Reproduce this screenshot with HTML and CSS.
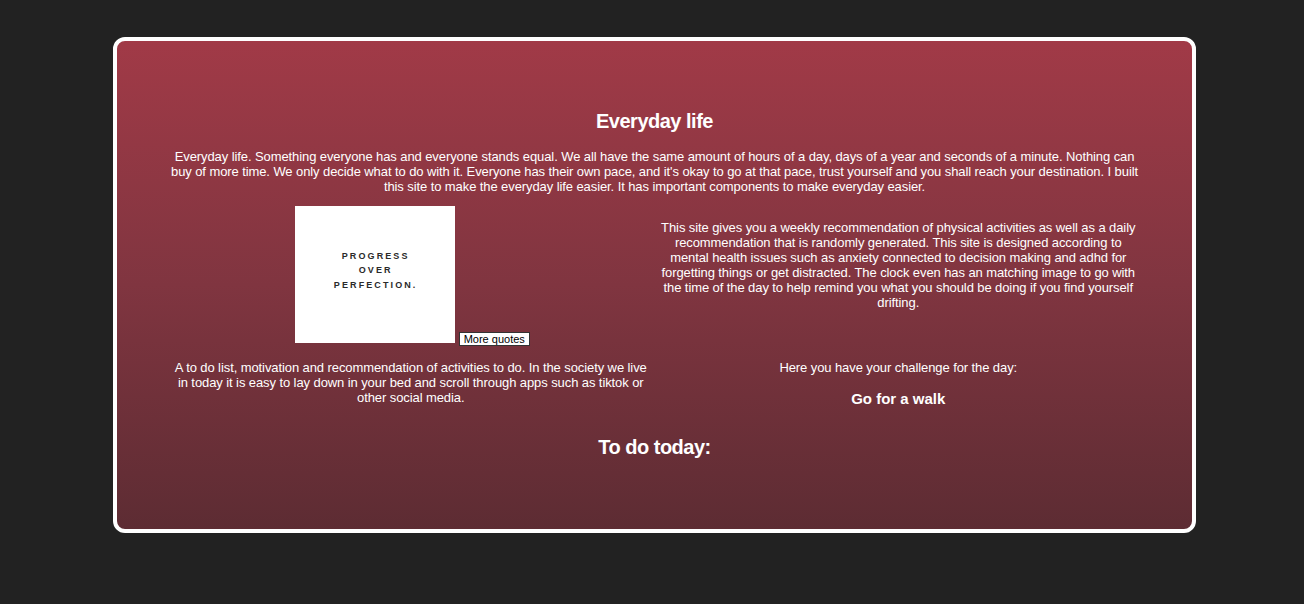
FILE: index.html
```html
<!DOCTYPE html>
<html lang="en">
<head>
<meta charset="utf-8">
<title>Everyday life</title>
<link rel="stylesheet" href="styles.css">
</head>
<body>
<main class="card">
  <h2 class="title">Everyday life</h2>
  <p class="intro">Everyday life. Something everyone has and everyone stands equal. We all have the same amount of hours of a day, days of a year and seconds of a minute. Nothing can buy of more time. We only decide what to do with it. Everyone has their own pace, and it's okay to go at that pace, trust yourself and you shall reach your destination. I built this site to make the everyday life easier. It has important components to make everyday easier.</p>
  <section class="grid">
    <div class="cell quote-cell">
      <div class="quote-img">
        <span>PROGRESS</span>
        <span>OVER</span>
        <span>PERFECTION.</span>
      </div>
      <button class="more-btn">More quotes</button>
    </div>
    <div class="cell text-cell">
      <p class="col-text">This site gives you a weekly recommendation of physical activities as well as a daily recommendation that is randomly generated. This site is designed according to mental health issues such as anxiety connected to decision making and adhd for forgetting things or get distracted. The clock even has an matching image to go with the time of the day to help remind you what you should be doing if you find yourself drifting.</p>
    </div>
    <div class="cell row2">
      <p class="col-text">A to do list, motivation and recommendation of activities to do. In the society we live in today it is easy to lay down in your bed and scroll through apps such as tiktok or other social media.</p>
    </div>
    <div class="cell row2">
      <p class="col-text">Here you have your challenge for the day:</p>
      <h3 class="challenge">Go for a walk</h3>
    </div>
  </section>
  <h2 class="todo">To do today:</h2>
</main>
</body>
</html>
```
FILE: styles.css
```css
html, body {
  margin: 0;
  padding: 0;
}
body {
  background: #222222;
  font-family: "Liberation Sans", Arial, sans-serif;
  color: #ffffff;
  padding: 37px 108px 0 113px;
  height: 604px;
  box-sizing: border-box;
}
.card {
  box-sizing: border-box;
  width: 1083px;
  height: 496px;
  border: 4px solid #ffffff;
  border-radius: 12px;
  background: linear-gradient(180deg, #a13a47 0%, #803540 50%, #5d2c33 100%);
  padding: 69px 50px 0 50px;
  text-align: center;
}
.title {
  font-size: 20px;
  line-height: 23px;
  letter-spacing: -0.5px;
  margin: 0;
  font-weight: bold;
}
.intro {
  font-size: 13px;
  line-height: 15px;
  letter-spacing: -0.09px;
  margin: 16px 0 0 0;
}
.grid {
  display: grid;
  grid-template-columns: 1fr 1fr;
  margin-top: 12px;
}
.cell {
  display: flex;
  flex-direction: column;
  align-items: center;
}
.quote-cell {
  flex-direction: row;
  justify-content: center;
  align-items: flex-end;
  gap: 4px;
  padding-left: 3px;
}
.quote-img {
  width: 160px;
  height: 137px;
  background: #ffffff;
  color: #2a2a2a;
  display: flex;
  flex-direction: column;
  align-items: center;
  justify-content: center;
  font-size: 9px;
  font-weight: bold;
  letter-spacing: 2.1px;
  line-height: 14.5px;
  padding-bottom: 8px;
  padding-left: 2px;
  box-sizing: border-box;
}
.more-btn {
  font-family: "Liberation Sans", Arial, sans-serif;
  font-size: 11px;
  line-height: 12px;
  padding: 0 4px;
  height: 14px;
  background: #ffffff;
  color: #000000;
  border: 1px solid #333333;
  border-radius: 0;
  margin-bottom: -3px;
}
.text-cell {
  justify-content: flex-start;
  padding-top: 14px;
}
.col-text {
  font-size: 13px;
  line-height: 15px;
  letter-spacing: -0.09px;
  margin: 0;
  padding: 0 4px;
}
.row2 {
  justify-content: flex-start;
  padding-top: 17px;
}
.challenge {
  font-size: 15px;
  line-height: 17px;
  margin: 15px 0 0 0;
  font-weight: bold;
}
.todo {
  font-size: 20px;
  line-height: 23px;
  letter-spacing: -0.5px;
  margin: 29px 0 0 0;
  font-weight: bold;
}
```
